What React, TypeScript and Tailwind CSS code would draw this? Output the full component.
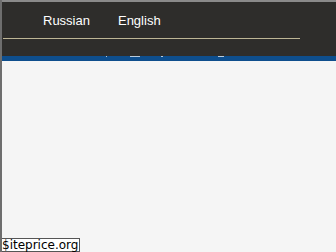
export default function App() {
  const langs = ['Russian', 'English'];
  // bits of the cut-off line that peek into the blue strip
  const marks = ['w-px ml-[104px]', 'w-[10px] ml-[23px]', 'w-[2px] ml-[21px]', 'w-[6px] ml-[55px]'];

  return (
    <div className="relative h-[252px] w-[336px] overflow-hidden border-l-2 border-[#6e6e6e] bg-[#f5f5f5] font-['Liberation_Sans',Arial,sans-serif]">
      <header className="h-[56px] border-t-2 border-[#8a8a8a] bg-[#2e2d2b]">
        <nav className="flex gap-[28px] pl-[41px] pt-[11px] text-[13px] leading-[15px] text-white">
          {langs.map((l) => (
            <a key={l} href="#">
              {l}
            </a>
          ))}
        </nav>
        <div className="ml-px mt-[10px] h-px w-[297px] bg-[#bdb595]" />
      </header>
      <div className="flex h-[5px] items-start bg-[#0e4e8d]">
        {marks.map((m) => (
          <span key={m} className={`h-px bg-white/70 ${m}`} />
        ))}
      </div>
      <div className="absolute bottom-0 left-[-2px] border border-[#555] bg-white px-px font-['DejaVu_Sans',Verdana,sans-serif] text-[12px] leading-[12px] text-black">
        $iteprice.org
      </div>
    </div>
  );
}
